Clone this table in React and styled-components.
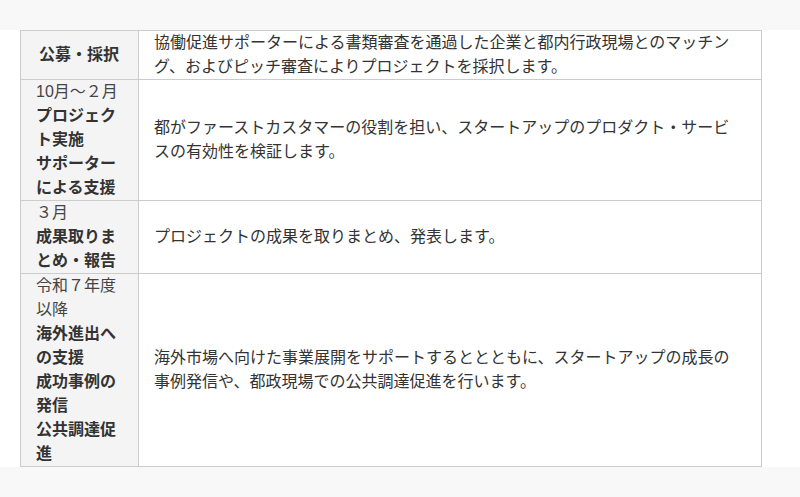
import React from 'react';
import styled, { createGlobalStyle } from 'styled-components';

const GlobalStyle = createGlobalStyle`
    html, body {
        margin : 0;
        padding : 0;
        background-color : #f8f8f8;
        font-family : 'Liberation Sans', 'Noto Sans CJK JP', sans-serif;
    }
`

/* 上部の余白 */
const TopBand = styled.div`
    height : 30px;
    background-color : #f8f8f8;
`

/* 本文エリア */
const Content = styled.section`
    background-color : #ffffff;
    padding : 0 38px 0 20px;
`

const Table = styled.table`
    width : 742px;
    border-collapse : collapse;
    table-layout : fixed;
    font-size : 16px;
    line-height : 24px;
    color : #333333;
`

const Head = styled.th`
    width : 86px;
    padding : 0 16px 0 15px;
    background-color : #f4f4f4;
    border : 1px solid #cccccc;
    text-align : left;
    vertical-align : middle;
    font-weight : normal;
`

const Label = styled.div`
    font-weight : bold;
    color : #333333;
    text-align : ${(props) => (props.$center ? 'center' : 'left')};
`

const Term = styled.div`
    color : #444444;
`

const Cell = styled.td`
    padding : 0 25px 0 15px;
    border : 1px solid #cccccc;
    vertical-align : middle;
`

const rows = [
    {
        terms : [],
        labels : ['公募・採択'],
        center : true,
        text : '協働促進サポーターによる書類審査を通過した企業と都内行政現場とのマッチング、およびピッチ審査によりプロジェクトを採択します。',
    },
    {
        terms : ['10月～２月'],
        labels : ['プロジェクト実施', 'サポーターによる支援'],
        text : '都がファーストカスタマーの役割を担い、スタートアップのプロダクト・サービスの有効性を検証します。',
    },
    {
        terms : ['３月'],
        labels : ['成果取りまとめ・報告'],
        text : 'プロジェクトの成果を取りまとめ、発表します。',
    },
    {
        terms : ['令和７年度以降'],
        labels : ['海外進出への支援', '成功事例の発信', '公共調達促進'],
        text : '海外市場へ向けた事業展開をサポートするととともに、スタートアップの成長の事例発信や、都政現場での公共調達促進を行います。',
    },
];

const App = () => {
    return (
        <>
            <GlobalStyle />
            <TopBand />
            <Content>
                <Table>
                    <tbody>
                        {rows.map((row, i) => (
                            <tr key={i}>
                                <Head>
                                    {row.terms.map((t) => (
                                        <Term key={t}>{t}</Term>
                                    ))}
                                    {row.labels.map((l) => (
                                        <Label key={l} $center={row.center}>{l}</Label>
                                    ))}
                                </Head>
                                <Cell>{row.text}</Cell>
                            </tr>
                        ))}
                    </tbody>
                </Table>
            </Content>
        </>
    );
}

export default App;
